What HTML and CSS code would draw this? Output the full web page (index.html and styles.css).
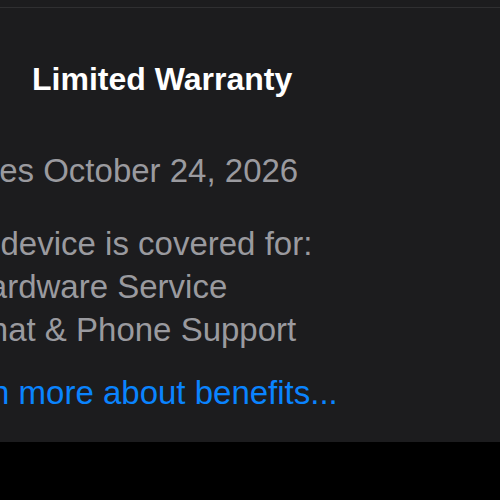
FILE: index.html
```html
<!DOCTYPE html>
<html lang="en">
<head>
<meta charset="utf-8">
<title>Limited Warranty</title>
<link rel="stylesheet" href="styles.css">
</head>
<body>
<div class="screen">
  <div class="topstrip"></div>
  <section class="panel">
    <h1 class="title">Limited Warranty</h1>
    <p class="expires">Expires October 24, 2026</p>
    <div class="coverage">
      <p class="line line-intro">This device is covered for:</p>
      <p class="line line-hw">Hardware Service</p>
      <p class="line line-chat">Chat &amp; Phone Support</p>
    </div>
    <a class="learn" href="#">Learn more about benefits...</a>
  </section>
</div>
</body>
</html>
```

FILE: styles.css
```css
html, body {
  margin: 0;
  padding: 0;
  background: #000;
}

.screen {
  width: 500px;
  height: 500px;
  overflow: hidden;
  background: #000;
  font-family: "Liberation Sans", Arial, sans-serif;
}

.topstrip {
  height: 7px;
  background: #1c1c1e;
  border-bottom: 1px solid #2f2f31;
}

.panel {
  background: #1c1c1e;
  height: 434px;
  overflow: hidden;
  display: flex;
  flex-direction: column;
  align-items: flex-start;
}

.title {
  margin: 51px 0 0 32px;
  font-size: 32px;
  line-height: 40px;
  font-weight: 700;
  color: #ffffff;
  white-space: nowrap;
}

.expires,
.line {
  margin: 0;
  font-size: 33px;
  line-height: 43px;
  color: #9a9a9f;
  white-space: nowrap;
}

.expires {
  margin-top: 50px;
  margin-left: -76px;
}

.coverage {
  margin-top: 30px;
  display: flex;
  flex-direction: column;
}

.line-intro { margin-left: -71px; }
.line-hw { margin-left: -35px; }
.line-chat { margin-left: -34px; }

.learn {
  margin-top: 20px;
  margin-left: -75px;
  font-size: 33px;
  line-height: 43px;
  color: #0a84ff;
  text-decoration: none;
  white-space: nowrap;
}
```
